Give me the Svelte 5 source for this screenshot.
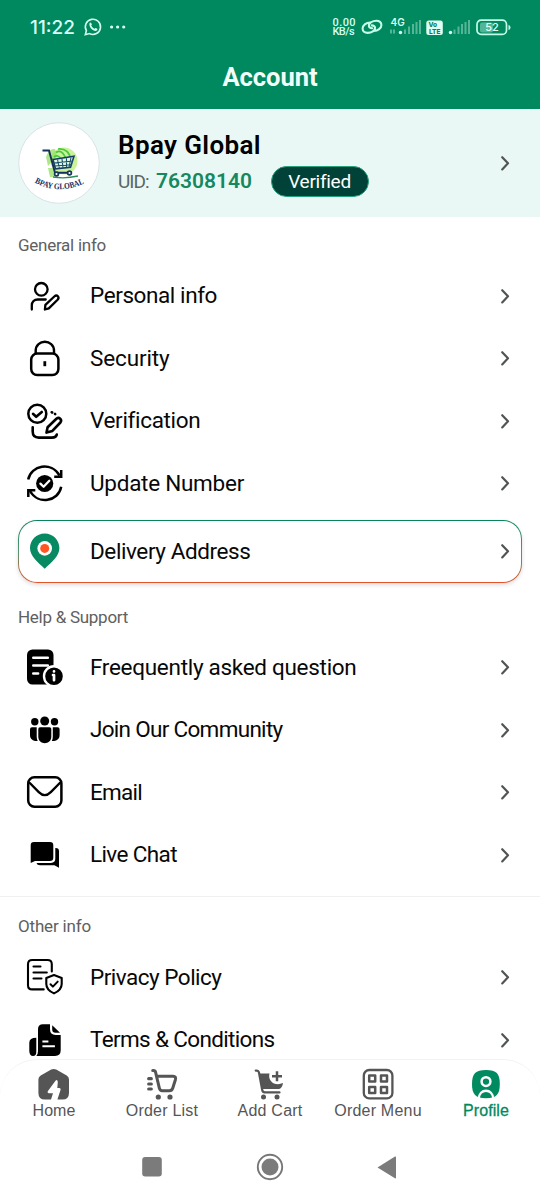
<script>
  const groups = [
    { title: 'General info', w: 88, rows: [
      { id: 'person', text: 'Personal info', w: 127 },
      { id: 'lock', text: 'Security', w: 79.5 },
      { id: 'verify', text: 'Verification', w: 109.5 },
      { id: 'update', text: 'Update Number', w: 154 },
      { id: 'pin', text: 'Delivery Address', w: 160.5, card: true }
    ] },
    { title: 'Help & Support', w: 110, rows: [
      { id: 'faq', text: 'Freequently asked question', w: 266.5 },
      { id: 'people', text: 'Join Our Community', w: 192.5 },
      { id: 'mail', text: 'Email', w: 52 },
      { id: 'chat', text: 'Live Chat', w: 87 }
    ] },
    { title: 'Other info', w: 73, rows: [
      { id: 'privacy', text: 'Privacy Policy', w: 131.5 },
      { id: 'terms', text: 'Terms & Conditions', w: 184.5 }
    ] }
  ];
  const tabs = [
    { id: 'home', text: 'Home', w: 43 },
    { id: 'list', text: 'Order List', w: 72.5 },
    { id: 'add', text: 'Add Cart', w: 65 },
    { id: 'menu', text: 'Order Menu', w: 87.5 },
    { id: 'profile', text: 'Profile', w: 46 }
  ];
  // Tracks each label so that it occupies its intended width.
  function fit(node, width) {
    const natural = node.getBoundingClientRect().width;
    node.style.letterSpacing = (width - natural) / node.textContent.length + 'px';
  }
</script>

{#snippet chevron()}
  <svg class="chevron" width="10" height="16" viewBox="0 0 10 16"><path d="M2.200 2.200 8 8.300l-5.800 6.100" /></svg>
{/snippet}

{#snippet rowIcon(id)}
  <svg class="icon" width="36" height="36" viewBox="0 0 36 36">
    {#if id === 'person'}
      <g stroke-width="2.300">
        <circle cx="14.300" cy="11.300" r="6.300" />
        <path d="M4.800 31.500v-4.100c0-3.600 2.400-5.900 6-5.900h7.900M17.900 31.500l.5-4.600 8.900-8.400c2.800-2.400 5.600.7 3.300 3.200l-8.800 8.700z" />
      </g>
    {:else if id === 'lock'}
      <rect x="4.200" y="13.600" width="27.200" height="21.500" rx="6" stroke-width="2.500" />
      <path d="M8.700 13.200v-2.400c0-12 18.300-12 18.300 0v2.400" stroke-width="2.400" />
      <path d="M17.800 21.200v5" stroke-width="2.800" stroke-linecap="butt" />
    {:else if id === 'verify'}
      <circle cx="10.300" cy="10.700" r="9" stroke-width="2.500" />
      <path d="m6 10.800 3.200 3L14.800 9M24.700 9.300l.5.200M28 10.900l.2.200M5.700 24.300v4.300q0 6 6 6H25q4 0 4.800-3M19.500 29.600l1.100-5.400 8.800-8.400c2.800-2.200 6 .9 4 3.700l-8 8.400z" stroke-width="2.600" />
    {:else if id === 'update'}
      <path d="M1.200 14.500C4 .2 24.400-3.700 32.600 10.500M34.200 21.800C31.400 36.800 11 40.200 3 26" stroke-width="2.500" stroke-linecap="butt" />
      <path d="M34.200 5v6.700h-7M1.300 32v-6.700h7" stroke-width="2.500" stroke-linejoin="miter" stroke-linecap="butt" />
      <circle class="solid" cx="17.700" cy="18.500" r="8.600" />
      <path class="white" d="m13.400 18.600 3.200 3.200 5.700-6" stroke-width="2.300" />
    {:else if id === 'pin'}
      <path d="M17.700.5C9.400.5 3 7 3 15.100c0 8.300 8 14.200 14.700 20.700 6.700-6.500 14.700-12.400 14.700-20.700C32.400 7 26 .5 17.700.5Z" fill="#078962" stroke="none" />
      <circle cx="17.700" cy="15.400" r="7.300" fill="#fff" stroke="none" />
      <circle cx="17.700" cy="15.400" r="4.500" fill="#ff5722" stroke="none" />
    {:else if id === 'faq'}
      <rect class="solid" x="0" y=".5" width="26.500" height="35" rx="5.500" />
      <path class="white" d="M6.300 8.800h14.500M6.300 16.500h14.500M6.300 24.500h4.800" stroke-width="2.600" />
      <circle cx="27" cy="27.200" r="10" fill="#000" stroke="#fff" stroke-width="2.400" />
      <path class="white" d="M27 22.300v.2M26 26h1v5.200" stroke-width="2.700" />
    {:else if id === 'people'}
      <g class="solid">
        <circle cx="7.800" cy="9.700" r="3.700" /><circle cx="17.700" cy="9" r="4.500" /><circle cx="27.500" cy="9.700" r="3.700" />
        <path d="M11.300 17q0-1.700 1.700-1.700h9.600q1.700 0 1.700 1.700v7.800c0 8.600-13 8.600-13 0zM5 15.300h4.700v9.500q0 2.600 1 4.200C6.500 29.300 3 27.400 3 23v-5.700q0-2 2-2M30.600 15.300h-4.800v9.500q0 2.600-1 4.200c4.300.3 7.800-1.600 7.800-6v-5.700q0-2-2-2" />
      </g>
    {:else if id === 'mail'}
      <rect x="1.200" y="3.300" width="33.200" height="29.500" rx="6.200" stroke-width="2.500" />
      <path d="m2.800 9 9 9.100q6 6 12 0l9-9.100" stroke-width="2.400" />
    {:else if id === 'chat'}
      <g class="solid">
        <path d="M7 5h16q3.300 0 3.300 3.300v12.500q0 3.200-3.300 3.200H8l-4.300 2V8.300Q3.700 5 7 5Z" />
        <path d="M28.300 11h.5q3.200 0 3.200 3.200v16.500l-4.600-2.400H13q-3 0-3.500-2.400H24q4.300 0 4.300-4.300z" />
      </g>
    {:else if id === 'privacy'}
      <path d="M24.800 12.500V5.200q0-4.200-4.200-4.200H5.200Q1 1 1 5.200v21q0 4.200 4.200 4.200h11.500M6.500 7.500h7M6.500 13.500h13.300M6.500 19.500h8" stroke-width="2.100" />
      <path d="m27 16.100 7.700 2.800v6c0 4.600-3.200 7.400-7.700 9.500-4.500-2.100-7.700-4.900-7.700-9.500v-6z" stroke-width="2.100" />
      <path d="m23.500 25.300 2.400 2.300 4.800-5" stroke-width="2" />
    {:else if id === 'terms'}
      <g class="solid">
        <path d="M16 2.300h7v5q0 5.600 5.600 5.600h5.100v15.400q0 5.700-5.700 5.700H9.300q1.700-1.800 1.700-4.700V7.300q0-5 5-5Z" />
        <path d="m25.200 3.300 7.800 7.500h-4.500q-3.300 0-3.300-3.300zM9.300 15.700v14q0 4.300-3.300 4.300c-2.200 0-3.700-2-3.700-5v-8.300q0-5 7-5Z" />
      </g>
      <path class="white" d="M15.400 19.500h6M15.400 24.300h12.500" stroke-width="1.900" stroke-linecap="butt" />
    {/if}
  </svg>
{/snippet}

{#snippet tabIcon(id)}
  <svg class="tabicon" width="32" height="32" viewBox="0 0 32 32">
    {#if id === 'home'}
      <path class="fill" d="M13.200 1.600q2.500-1.300 5 0l10.500 6q2.300 1.400 2.300 4V25q0 6.600-6.600 6.600h-5L22.600 21.700q.3-1.700-1.300-1.700h-2l.5-6q-.5-3.300-2.500-1.100L9.800 23.300q-.9 1.700.9 2H15l-2 6.300H7Q.4 31.600.4 25V11.600q0-2.600 2.300-4z" />
    {:else if id === 'list'}
      <path d="M6.700 2.600h.8q1.700 0 2.100 1.700l3.800 16q.5 2.500 3 2.500h6.900q2.600 0 3.400-2.500l2.700-8.600q1-3.500-2.300-3.500H11" stroke-width="3" />
      <path d="M2.700 10.700h2.600M2.700 16h2.600M2.700 21h2.600" stroke-width="3.200" />
      <circle class="fill" cx="12.300" cy="29" r="2.600" /><circle class="fill" cx="24" cy="29" r="2.600" />
    {:else if id === 'add'}
      <path d="M1.700 2.600h1.200q1.600 0 2 1.700l3.300 17.800q.5 2.300 2.600 2.300h14.700" stroke-width="2.200" />
      <path class="fill" d="M5.200 5.400h10.300c-2 7.500 5.300 13.300 13.500 9.700-.7 4.300-2.200 6-5 6H8z" />
      <path d="M23 3.300v10M18 8.300h10" stroke-width="2.500" stroke-linecap="butt" />
      <circle class="fill" cx="9.500" cy="29" r="2.500" /><circle class="fill" cx="23" cy="29" r="2.500" />
    {:else if id === 'menu'}
      <rect x="1.800" y="2" width="28.600" height="28.400" rx="5.500" stroke-width="2.300" />
      <path d="M7.200 7.400h6v6h-6zM19 7.400h6v6h-6zM7.200 19h6v6h-6zM19 19h6v6h-6z" stroke-width="2.500" />
    {:else}
      <path class="fill" d="M16 2c10.500 0 13.800 3.500 13.800 14S26.500 30.200 16 30.200 2 26.500 2 16 5.500 2 16 2Z" />
      <circle cx="16" cy="13.600" r="4.400" stroke="#fff" stroke-width="2.500" />
      <path d="M8.800 31c0-11 14.400-11 14.400 0" stroke="#fff" stroke-width="2.300" stroke-linecap="butt" />
    {/if}
  </svg>
{/snippet}

<div class="screen">
  <header>
    <div class="status">
      <span class="clock" use:fit={45}>11:22</span>
      <svg class="wa" width="18" height="18" viewBox="0 0 18 18"><path d="m1.300 16.700 1.100-4A7.600 7.600 0 1 1 5.500 15.600z" /><path class="phone" d="M5.500 5.200c.7-1 1.500-.7 1.800.1l.6 1.300-.7 1c.9 1.700 1.900 2.500 3.400 3.200l1-.9 1.700.9c.7.500-.4 2.100-1.700 2.200-2.900 0-7-4.200-6.100-7.800Z" /></svg>
      <svg class="dots" width="18" height="6" viewBox="0 0 18 6"><circle cx="2.600" cy="3" r="1.600" /><circle cx="8.600" cy="3" r="1.600" /><circle cx="14.700" cy="3" r="1.600" /></svg>
      <span class="speed"><span use:fit={23.500}>0.00</span><span use:fit={21.500}>KB/s</span></span>
      <svg class="link" width="22" height="18" viewBox="0 0 22 18"><path d="M9.200 4.500C5 4.600 1.600 7.300 1.600 10.600c0 2.500 2 4.300 5 4.300 4.200 0 7.500-2.400 7.500-5.100 0-1.500-1.400-2.400-3.300-2.400M12.800 13c4.200-.1 7.600-2.700 7.600-6 0-2.500-2-4.300-5-4.300-4.200 0-7.500 2.400-7.500 5.100 0 1.500 1.400 2.400 3.300 2.400" /></svg>
      <svg class="cell" width="32" height="18" viewBox="0 0 32 18"><text x="0.500" y="8">4G</text><path class="dim" d="M1 11.500v4M4 11.500v4M15 11.500V16M19 8.500V16M23 6v10M26.500 4v12M30 2V16" /><circle cx="10.500" cy="14.500" r="1.700" /></svg>
      <svg class="volte" width="17" height="17" viewBox="0 0 17 17"><rect x=".3" y="1.500" width="16.500" height="14.600" rx="2.500" /><text x="2.500" y="8">Vo</text><text x="3" y="14.700">LTE</text></svg>
      <svg class="cell two" width="23" height="18" viewBox="0 0 23 18"><path class="dim" d="M6.500 11.500V16M10.500 8.500V16M14 6v10M17.500 4v12M21 2V16" /><circle cx="2.500" cy="14.500" r="1.700" /></svg>
      <svg class="battery" width="36" height="17" viewBox="0 0 36 17"><rect class="level" x="4" y="3.500" width="13" height="10" rx="2" /><rect class="shell" x="1" y="1.200" width="29.500" height="14.200" rx="4.200" /><path d="M32.500 6v5q2-.3 2-2.500t-2-2.500" /><text x="9.300" y="12.400">52</text></svg>
    </div>
    <h1><span use:fit={95}>Account</span></h1>
  </header>

  <main>
    <section class="profile">
      <svg class="avatar" width="82" height="82" viewBox="0 0 82 82">
        <circle cx="41" cy="41" r="40.300" fill="#fff" stroke="#d8e3e8" />
        <g transform="translate(1 -1)">
          <circle cx="45" cy="40" r="13.500" fill="#c9f29b" />
          <path d="M27 36q3-9 9-8l2 7-9 10ZM29 47h6v9h-4z" fill="#8add58" opacity=".7" />
          <g fill="none" stroke="#48c93a" stroke-width="1.700"><path d="M37 31.500q6-4 10 6.500M35 36q4-3 7 2M39 28q10-1 13 10" /></g>
          <path d="m34 38.500 21-3.300-3.500 11-15 1.700Z" fill="#dff8df" stroke="#193c66" stroke-width="1.600" />
          <path d="m35 42 19-2M36 45l17-1.500M38.500 38.500l2 9M43 38l1 9M47.500 37.300v9M52 36.500l-2 10" stroke="#1b526d" stroke-width="1.100" />
          <path d="M23.500 29.500H30l6 22.200h16" fill="none" stroke="#162e59" stroke-width="1.900" />
          <path d="M34 56q12 2 25-1" fill="none" stroke="#2d8b58" stroke-width="1.300" />
          <g fill="#fff" stroke="#173958" stroke-width="1.700"><circle cx="37.500" cy="53" r="1.900" /><circle cx="50.500" cy="52" r="1.900" /></g>
        </g>
        <path id="arc" d="M16.500 60.500Q41 74 68 60.500" fill="none" />
        <text><textPath href="#arc" textLength="52" lengthAdjust="spacingAndGlyphs">BPAY GLOBAL</textPath></text>
      </svg>
      <div class="who">
        <div class="name"><span use:fit={143}>Bpay Global</span></div>
        <div class="meta">
          <span class="uid" use:fit={34}>UID:</span>
          <b use:fit={97}>76308140</b>
          <span class="badge"><span use:fit={62}>Verified</span></span>
        </div>
      </div>
      {@render chevron()}
    </section>

    {#each groups as group, i}
      <section class="group" class:ruled={i === 2}>
        <h2><span use:fit={group.w}>{group.title}</span></h2>
        {#each group.rows as row}
          <div class="row" class:card={row.card}>
            {@render rowIcon(row.id)}
            <span class="label"><span use:fit={row.w}>{row.text}</span></span>
            {@render chevron()}
          </div>
        {/each}
      </section>
    {/each}
  </main>

  <footer>
    <nav>
      {#each tabs as tab}
        <div class="tab" class:active={tab.id === 'profile'}>
          {@render tabIcon(tab.id)}
          <span use:fit={tab.w}>{tab.text}</span>
        </div>
      {/each}
    </nav>
    <div class="system">
      <svg width="22" height="24" viewBox="0 0 22 24"><rect x="1.200" y="2" width="19.600" height="19.600" rx="3" /></svg>
      <svg width="28" height="28" viewBox="0 0 28 28"><circle class="ring" cx="14" cy="14" r="12.200" /><circle cx="14" cy="14" r="8.500" /></svg>
      <svg width="20" height="24" viewBox="0 0 20 24"><path d="M.5 12.500 18 1.600q1-.5 1 .7v20.300q0 1.200-1 .6Z" /></svg>
    </div>
  </footer>
</div>

<style>
  .screen { width: 540px; height: 1200px; display: flex; flex-direction: column; overflow: hidden; background: #fff; font-family: Roboto, sans-serif; color: #080808; }
  svg { display: block; flex: none; overflow: visible; }
  span, b { white-space: nowrap; }
  header { height: 109px; flex: none; background: #00885f; color: #f3fffa; }
  .status { height: 54px; display: flex; align-items: center; padding-left: 30px; box-sizing: border-box; }
  .clock { font: 500 19px Inter, sans-serif; width: 45px; color: #dcfff3; }
  .wa { margin-left: 9px; fill: none; stroke: #d6fff0; stroke-width: 1.600; }
  .wa .phone { fill: #d6fff0; stroke: none; }
  .dots { margin-left: 7px; fill: #d6fff0; }
  .speed { width: 25px; margin-left: 205.500px; display: flex; flex-direction: column; align-items: flex-start; font: 500 11px/9.500px Roboto, sans-serif; color: #d6fff0; }
  .speed span { height: 9.500px; line-height: 9.500px; }
  .link { margin-left: 3px; fill: none; stroke: #c3fce7; stroke-width: 2.100; stroke-linecap: round; }
  .cell { margin-left: 7px; fill: #d6fff0; }
  .cell.two { margin-left: 5px; }
  .cell text { font: 600 10px Inter, sans-serif; }
  .cell .dim { stroke: #55b596; stroke-width: 2; }
  .volte { margin-left: 4px; fill: #dffff4; }
  .volte text { font: 800 6.500px Inter, sans-serif; fill: #08815d; }
  .battery { margin-left: 5px; fill: #c3fce7; }
  .battery .shell { fill: none; stroke: #c3fce7; stroke-width: 1.700; }
  .battery .level { fill: #52b595; }
  .battery text { font: 500 11px Inter, sans-serif; fill: #e5fff6; }
  h1 { margin: 0; height: 46px; display: flex; align-items: center; justify-content: center; font: 700 25.500px Roboto, sans-serif; }
  main { flex: 1; min-height: 0; overflow: hidden; }
  .chevron { margin-left: auto; fill: none; stroke: #505552; stroke-width: 2.200; stroke-linecap: round; stroke-linejoin: round; }
  .profile { height: 108px; box-sizing: border-box; background: #e9f8f4; display: flex; align-items: center; padding: 0 30px 0 18px; }
  .avatar text { font: 700 8.500px "Liberation Serif", serif; fill: #172e5d; }
  .who { margin-left: 18px; }
  .name { font-size: 26px; line-height: 32px; margin-bottom: 4px; font-weight: 600; color: #000; }
  .meta { display: flex; align-items: center; height: 32px; margin-top: 4px; font-size: 19px; color: #5b6663; }
  .uid { width: 38px; }
  .meta b { width: 97px; font-size: 21px; font-weight: 600; color: #168861; }
  .badge { box-sizing: border-box; width: 98px; height: 31px; margin-left: 17.500px; display: flex; align-items: center; justify-content: center; border: 1.500px solid #22a27d; border-radius: 16px; background: #004238; color: #fff; font-size: 19px; }
  h2 { margin: 0; padding: 9px 18px 0; box-sizing: border-box; display: flex; align-items: center; height: 47.500px; font: 400 17px Roboto, sans-serif; color: #606060; }
  .row { height: 62.500px; box-sizing: border-box; padding: 0 30px 0 27px; display: flex; align-items: center; }
  .label { margin: 0 0 1px 27px; font-size: 22.500px; line-height: 30px; }
  .icon { fill: none; stroke: #000; stroke-width: 2; stroke-linecap: round; stroke-linejoin: round; }
  .icon .solid { fill: #000; stroke: none; }
  .icon .white { stroke: #fff; }
  .card { height: 63px; margin: 5px 18px 6px; padding: 0 11px 0 8px; border: 1.500px solid transparent; border-radius: 19px; background: linear-gradient(#fff, #fff) padding-box, linear-gradient(#07845d, #579474 50%, #e65327) border-box; box-shadow: 0 2px 4px #0002; }
  .ruled { margin-top: 10px; border-top: 1px solid #f0f0f0; }
  .ruled h2 { height: 49px; padding-top: 9px; }
  footer { height: 141px; flex: none; box-sizing: border-box; background: #fff; border-top: 1px solid #f3f3f3; border-radius: 37px 37px 0 0; }
  nav { display: flex; height: 78px; }
  .tab { width: 108px; display: flex; flex-direction: column; align-items: center; padding-top: 8px; color: #555; font: 400 16px/22px "Liberation Sans", sans-serif; }
  .tab.active { color: #008a60; -webkit-text-stroke: .3px #008a60; }
  .tabicon { fill: none; stroke: currentColor; stroke-linecap: round; stroke-linejoin: round; }
  .tabicon .fill { fill: currentColor; stroke: none; }
  .system { height: 58px; display: flex; align-items: center; justify-content: center; gap: 93px; margin-left: -2px; fill: #7b7b7b; }
  .system .ring { fill: none; stroke: #777; stroke-width: 1.900; }
</style>
